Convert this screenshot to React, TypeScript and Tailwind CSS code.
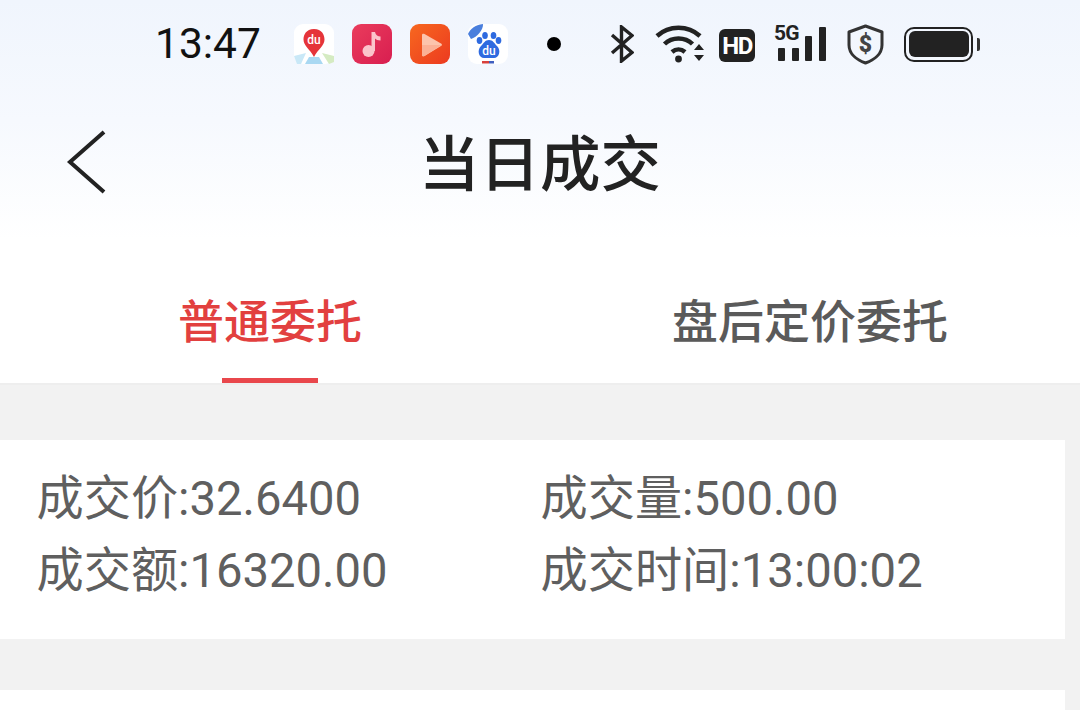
const FONT = "font-['Roboto','Noto_Sans_CJK_SC',sans-serif]";

function MapIcon() {
  return (
    <svg width="40" height="40" viewBox="0 0 40 40">
      <rect width="40" height="40" rx="9" fill="#fff" />
      <path d="M0 32 L12 29 L7 40 L3 40 Z" fill="#c9e8f7" />
      <path d="M15 33 L25 33 L29 40 L11 40 Z" fill="#a9d8f2" />
      <path d="M28 29 L40 32 L40 38 L35 40 Z" fill="#d5ebc2" />
      <path d="M20 5 C12 5 9.500 11 9.500 15.500 C9.500 22 16 25 20 33 C24 25 30.500 22 30.500 15.500 C30.500 11 28 5 20 5 Z" fill="#e5343a" />
      <text x="20" y="19.500" textAnchor="middle" fontSize="12" fontWeight="500" fill="#fff" fontFamily="Roboto">du</text>
    </svg>
  );
}

function MusicIcon() {
  return (
    <svg width="40" height="40" viewBox="0 0 40 40">
      <defs>
        <linearGradient id="music" x1="0" y1="0" x2="1" y2="1">
          <stop offset="0" stopColor="#ea3c5c" />
          <stop offset="1" stopColor="#d81e50" />
        </linearGradient>
      </defs>
      <rect width="40" height="40" rx="9" fill="url(#music)" />
      <circle cx="16.500" cy="27" r="6" fill="#fbc4cb" />
      <path d="M19.500 27 V8 H23 C23.500 11 26 12.500 28.500 12.500 V16.500 C26 16.500 24 15.500 23 14.500 V27 Z" fill="#fbc4cb" />
    </svg>
  );
}

function VideoIcon() {
  return (
    <svg width="40" height="40" viewBox="0 0 40 40">
      <defs>
        <linearGradient id="video" x1="0" y1="0" x2="1" y2="1">
          <stop offset="0" stopColor="#f7681f" />
          <stop offset="1" stopColor="#ec3a20" />
        </linearGradient>
      </defs>
      <rect width="40" height="40" rx="9" fill="url(#video)" />
      <path d="M12 11 C12 9.500 13.500 9.500 14.500 10 L31 19.500 C32.200 20.300 32.200 21.200 31 22 L14.500 32 C13.500 32.500 12 32.500 12 31 Z" fill="#fcc4ac" />
      <path d="M12 21 L31.500 21 L14.500 32 C13.500 32.500 12 32.500 12 31 Z" fill="#fbb196" />
    </svg>
  );
}

function BaiduIcon() {
  return (
    <svg width="40" height="40" viewBox="0 0 40 40">
      <rect width="40" height="40" rx="9" fill="#fff" />
      <path d="M0 10 C2 5 7 1 15 0 C15.500 6 9 13 3 15 Z" fill="#4a7fdd" />
      <ellipse cx="11.500" cy="16.500" rx="2.800" ry="3.400" fill="#2e6ae0" />
      <ellipse cx="17" cy="11.500" rx="2.800" ry="3.500" fill="#2e6ae0" />
      <ellipse cx="25.500" cy="11.500" rx="2.800" ry="3.500" fill="#2e6ae0" />
      <ellipse cx="30.500" cy="16.500" rx="2.800" ry="3.400" fill="#2e6ae0" />
      <path d="M21 16 C25 16 26 19 29 22 C33.500 26.500 31 34 26 34 L16 34 C11 34 8.500 26.500 13 22 C16 19 17 16 21 16 Z" fill="#2e6ae0" />
      <text x="21" y="31" textAnchor="middle" fontSize="12" fontWeight="500" fill="#fff" fontFamily="Roboto">du</text>
      <rect x="14" y="37" width="7" height="2.500" fill="#d8403c" />
      <rect x="21" y="37" width="5" height="2.500" fill="#3f5fc0" />
    </svg>
  );
}

function Bluetooth() {
  return (
    <svg width="24" height="38" viewBox="0 0 24 38" fill="none" stroke="#222" strokeWidth="3.400">
      <path d="M2 10 L22 27.500 L11.500 36 V2 L22 10.500 L2 28" strokeLinejoin="miter" />
    </svg>
  );
}

function Wifi() {
  return (
    <svg width="50" height="40" viewBox="0 0 50 40" fill="none" stroke="#222" strokeWidth="4.500">
      <path d="M2 12 C14 1 33 1 45 12" />
      <path d="M9.500 20 C17 12.500 30 12.500 37.500 20" />
      <path d="M17 28 C21 24.500 26 24.500 30 28" />
      <circle cx="23.500" cy="35" r="3.400" fill="#222" stroke="none" />
      <path d="M39 26 L49 26 L44 20 Z M39 31 L49 31 L44 37 Z" fill="#222" stroke="none" />
    </svg>
  );
}

function HdBadge() {
  return (
    <div className="mt-[3px] flex h-[33px] w-[36px] items-center justify-center rounded-[6px] bg-[#222] font-['Roboto',sans-serif] text-[24px] font-bold leading-none tracking-[-1.5px] text-white">
      HD
    </div>
  );
}

function Signal() {
  return (
    <div className="relative mb-[4px] flex h-[37px] w-[52px] items-end gap-[6.500px]">
      <span className="absolute left-0 top-0 font-['Roboto',sans-serif] text-[21px] font-bold leading-[18px] tracking-[-0.8px] text-[#222]">5G</span>
      <div className="ml-[4px] h-[13px] w-[7px] rounded-[1px] bg-[#222]" />
      <div className="h-[13px] w-[7px] rounded-[1px] bg-[#222]" />
      <div className="h-[25px] w-[7px] rounded-[1px] bg-[#222]" />
      <div className="h-[34px] w-[7px] rounded-[1px] bg-[#222]" />
    </div>
  );
}

function Shield() {
  return (
    <svg width="37" height="41" viewBox="0 0 37 41" fill="none">
      <path d="M18.500 2 L35 8 V21 C35 30 27 36 18.500 39 C10 36 2 30 2 21 V8 Z" stroke="#333" strokeWidth="3" strokeLinejoin="round" />
      <text x="18.500" y="28" textAnchor="middle" fontSize="23" fontWeight="900" fill="#444" fontFamily="Roboto">$</text>
    </svg>
  );
}

function Battery() {
  return (
    <div className="flex items-center gap-[4px]">
      <div className="h-[35px] w-[69px] rounded-[10px] border-2 border-[#222] p-[2.500px]">
        <div className="h-full w-full rounded-[6px] bg-[#222]" />
      </div>
      <div className="h-[13px] w-[3px] rounded-r-[2px] bg-[#333]" />
    </div>
  );
}

function StatusBar() {
  return (
    <div className="flex h-[88px] items-center pl-[155px]">
      <span className="w-[139px] font-['Roboto',sans-serif] text-[42.500px] font-normal leading-none text-[#111]">13:47</span>
      <div className="flex items-center gap-[18px]">
        <MapIcon />
        <MusicIcon />
        <VideoIcon />
        <BaiduIcon />
      </div>
      <div className="ml-[39px] h-[14px] w-[14px] rounded-full bg-black" />
      <div className="ml-[49px] flex items-center">
        <Bluetooth />
        <div className="ml-[21px]"><Wifi /></div>
        <div className="ml-[14px]"><HdBadge /></div>
        <div className="ml-[19px]"><Signal /></div>
        <div className="ml-[21px]"><Shield /></div>
        <div className="ml-[20px]"><Battery /></div>
      </div>
    </div>
  );
}

function Trade({ rows }: { rows: string[][] }) {
  return (
    <div className="h-[199px] w-[1065px] bg-white pl-[36.500px] pt-[22.500px]">
      {rows.map((row) => (
        <div key={row[0]} className="grid h-[72px] grid-cols-[504px_1fr] items-center text-[47.200px] leading-[72px] text-[#5f5f5f]">
          <span>{row[0]}</span>
          <span>{row[1]}</span>
        </div>
      ))}
    </div>
  );
}

export default function App() {
  return (
    <div className={`${FONT} h-[710px] w-[1080px] overflow-hidden bg-[#f2f2f2]`}>
      <div className="bg-gradient-to-b from-[#f0f5fd] via-[#f6f9fe] via-50% to-white">
        <StatusBar />
        <div className="relative flex h-[152px] items-center justify-center pt-[5px]">
          {/* back arrow */}
          <svg className="absolute left-[65px] top-[42px]" width="42" height="64" viewBox="0 0 42 64" fill="none" stroke="#222" strokeWidth="4">
            <path d="M39 2 L5 32 L39 62" />
          </svg>
          <h1 className="text-[60.500px] font-medium leading-none text-[#222]">当日成交</h1>
        </div>
      </div>
      <div className="flex h-[145px] border-b-2 border-[#eeeeee] bg-white">
        <div className="flex w-[540px] flex-col items-center pt-[50px]">
          <span className="text-[46px] font-medium leading-[64px] text-[#e2403f]">普通委托</span>
          <div className="mt-[24px] h-[6px] w-[96px] bg-[#e9474c]" />
        </div>
        <div className="flex w-[540px] flex-col items-center pt-[50px]">
          <span className="text-[46px] font-medium leading-[64px] text-[#5a5a5a]">盘后定价委托</span>
        </div>
      </div>
      <div className="flex flex-col gap-[51px] pt-[55px]">
        <Trade rows={[["成交价:32.6400", "成交量:500.00"], ["成交额:16320.00", "成交时间:13:00:02"]]} />
        <Trade rows={[]} />
      </div>
    </div>
  );
}
